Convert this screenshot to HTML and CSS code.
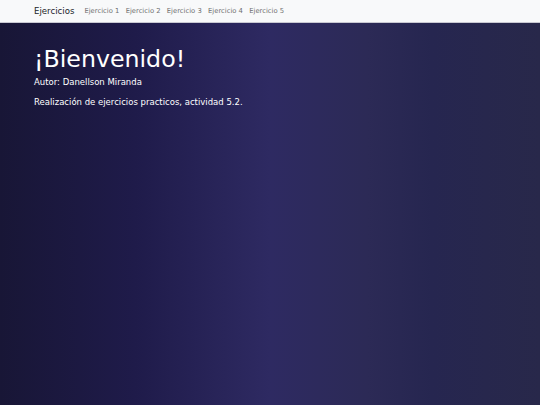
FILE: index.html
```html
<!DOCTYPE html>
<html lang="es">
<head>
<meta charset="UTF-8">
<meta name="viewport" content="width=device-width, initial-scale=1.0">
<title>Ejercicios</title>
<link rel="stylesheet" href="styles.css">
</head>
<body>

<nav class="navbar">
    <a class="brand" href="#">Ejercicios</a>
    <ul class="nav-links">
        <li><a href="#">Ejercicio 1</a></li>
        <li><a href="#">Ejercicio 2</a></li>
        <li><a href="#">Ejercicio 3</a></li>
        <li><a href="#">Ejercicio 4</a></li>
        <li><a href="#">Ejercicio 5</a></li>
    </ul>
</nav>

<main class="hero">
    <h1 class="title">¡Bienvenido!</h1>
    <p class="author">Autor: Danellson Miranda</p>
    <p class="desc">Realización de ejercicios practicos, actividad 5.2.</p>
</main>

</body>
</html>
```

FILE: styles.css
```css
html, body {
    height: 100%;
}

body {
    margin: 0;
    font-family: "DejaVu Sans", sans-serif;
    display: flex;
    flex-direction: column;
}

.navbar {
    display: flex;
    align-items: center;
    height: 22px;
    padding: 0 34px;
    background-color: #f8f9fa;
    border-bottom: 1px solid #c9c9d2;
}

.brand {
    font-size: 8.6px;
    line-height: 1.2;
    color: #212529;
    text-decoration: none;
    margin-right: 10px;
}

.nav-links {
    display: flex;
    align-items: center;
    gap: 6.3px;
    list-style: none;
    margin: 0;
    padding: 0;
    font-size: 6.8px;
    line-height: 1.2;
}

.nav-links a {
    color: #707070;
    text-decoration: none;
}

.hero {
    flex: 1;
    padding: 22px 34px;
    color: #ffffff;
    background: linear-gradient(90deg, #181636 0%, #1f1b4a 25%, #2e2a62 50%, #2c2a56 68%, #262650 80%, #28284a 100%);
}

.title {
    font-weight: normal;
    font-size: 23.7px;
    margin: 0 0 4px;
}

.author {
    font-size: 8.5px;
    margin: 0 0 10px;
}

.desc {
    font-size: 8.5px;
    margin: 0;
}
```
